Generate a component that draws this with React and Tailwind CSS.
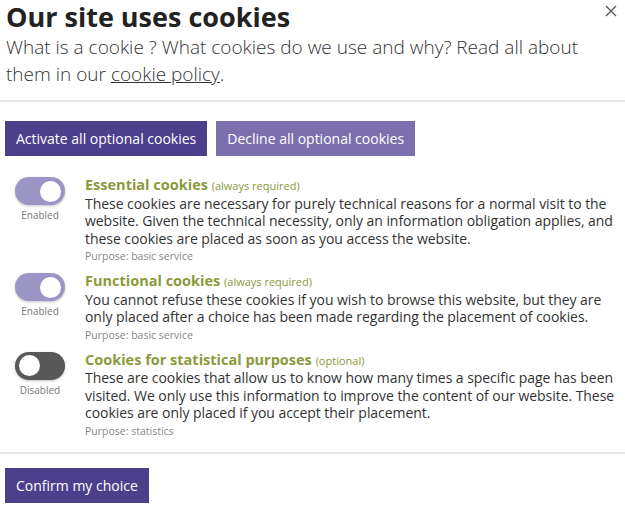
import React, { useState } from "react";

const purple = "bg-[#4c3f8c]";

const Toggle = ({ on, label }) => (
  <div className="flex w-[80px] shrink-0 flex-col items-center pt-px">
    <div
      className={`flex h-[28px] w-[50px] items-center rounded-full px-[4px] shadow-[0_1px_3px_rgba(0,0,0,0.25)] ${
        on ? "justify-end bg-[#9b95c6]" : "justify-start bg-[#585858]"
      }`}
    >
      <div className="h-[21px] w-[21px] rounded-full bg-white" />
    </div>
    <span className="mt-[4px] text-[10px] leading-[12px] text-[#777]">{label}</span>
  </div>
);

const CookieRow = ({ on, label, title, note, text, purpose }) => (
  <div className="flex items-start">
    <Toggle on={on} label={label} />
    <div className="pl-[5px] pr-[4px]">
      <div className="text-[14.5px] leading-[17.5px]">
        <span className="font-bold text-[#8a9a3c]">{title}</span>{" "}
        <span className="text-[11px] text-[#8a9a3c]">{note}</span>
      </div>
      <p className="text-[14px] leading-[17.5px] tracking-[-0.05px] text-[#333]">{text}</p>
      <p className="mt-[2px] text-[10.5px] leading-[14px] text-[#888]">{purpose}</p>
    </div>
  </div>
);

export default function App() {
  const [open, setOpen] = useState(true);
  if (!open) return null;

  return (
    <div className="h-[513px] w-[625px] overflow-hidden bg-white font-['Open_Sans',sans-serif] text-[#222]">
      <div className="relative px-[6px] pb-[12px]">
        <h1 className="text-[27px] font-bold leading-[34px] text-[#222]">Our site uses cookies</h1>
        <p className="text-[19px] font-light leading-[27px] text-[#333]">
          What is a cookie ? What cookies do we use and why? Read all about them in our{" "}
          <a href="#" className="underline">
            cookie policy
          </a>
          .
        </p>
        <button
          onClick={() => setOpen(false)}
          className="absolute right-[8px] top-[5px] text-[#555]"
          aria-label="Close"
        >
          <svg width="12" height="12" viewBox="0 0 12 12" stroke="currentColor" strokeWidth="1.3">
            <path d="M1 1l10 10M11 1L1 11" />
          </svg>
        </button>
      </div>
      <div className="border-t-2 border-[#e6e6e6]" />

      <div className="flex gap-[9px] px-[5px] pt-[19px]">
        <button className={`h-[35px] px-[11px] text-[14px] text-white ${purple}`}>
          Activate all optional cookies
        </button>
        <button className="h-[35px] bg-[#7b70ad] px-[11px] text-[14px] text-white">
          Decline all optional cookies
        </button>
      </div>

      <div className="flex flex-col gap-[9px] pt-[20px]">
        <CookieRow
          on
          label="Enabled"
          title="Essential cookies"
          note="(always required)"
          text="These cookies are necessary for purely technical reasons for a normal visit to the website. Given the technical necessity, only an information obligation applies, and these cookies are placed as soon as you access the website."
          purpose="Purpose: basic service"
        />
        <CookieRow
          on
          label="Enabled"
          title="Functional cookies"
          note="(always required)"
          text="You cannot refuse these cookies if you wish to browse this website, but they are only placed after a choice has been made regarding the placement of cookies."
          purpose="Purpose: basic service"
        />
        <CookieRow
          label="Disabled"
          title="Cookies for statistical purposes"
          note="(optional)"
          text="These are cookies that allow us to know how many times a specific page has been visited. We only use this information to improve the content of our website. These cookies are only placed if you accept their placement."
          purpose="Purpose: statistics"
        />
      </div>

      <div className="mt-[14px] border-t-2 border-[#e6e6e6]" />
      <div className="px-[5px] pt-[14px]">
        <button className={`h-[35px] px-[11px] text-[14px] text-white ${purple}`}>Confirm my choice</button>
      </div>
    </div>
  );
}
